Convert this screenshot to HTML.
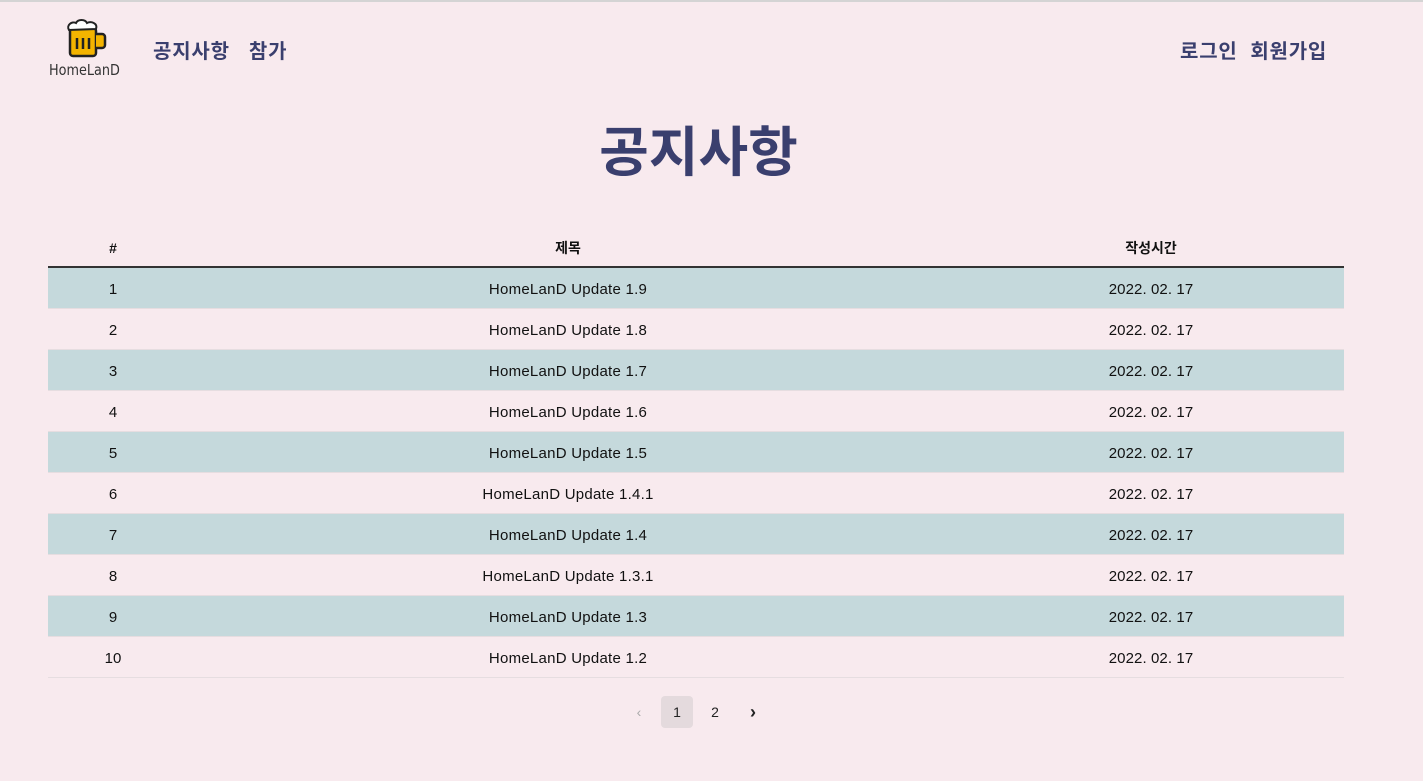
<!DOCTYPE html>
<html><head><meta charset="utf-8"><style>
body{margin:0;width:1423px;height:781px;background:#f8eaee;font-family:"Liberation Sans","Noto Sans CJK KR",sans-serif;border-top:2px solid #d4d4d4;box-sizing:border-box;position:relative;overflow:hidden}
.nav{position:absolute;top:33px;font-size:20px;font-weight:bold;color:#3a3f6e;letter-spacing:0.8px}
h1{position:absolute;top:106px;left:-13px;width:1423px;text-align:center;margin:0;font-size:54px;color:#3a3f6e;font-weight:bold}
table{position:absolute;left:48px;top:228px;width:1296px;border-collapse:collapse;font-size:15px;color:#111}
th{height:36px;padding:0;font-weight:bold;font-size:14px;border-bottom:2px solid #333}
td{height:37px;padding:3px 0 0 0;line-height:16px;text-align:center;border-bottom:1px solid #e6dde0}
td:nth-child(2){letter-spacing:0.25px}
td:nth-child(3){letter-spacing:0.1px}
tr.o td{background:#c5d9dc}
.pg{position:absolute;top:694px;font-size:14px;color:#222;text-align:center;width:32px;height:32px;line-height:32px;border-radius:4px}
</style></head><body>
<svg style="position:absolute;left:64px;top:16px" width="44" height="40" viewBox="0 0 44 40">
<rect x="6" y="10" width="26" height="28" rx="3" fill="#f4b400" stroke="#222" stroke-width="2.5"/>
<path d="M32 16h6a3 3 0 0 1 3 3v8a3 3 0 0 1-3 3h-6" fill="#f4b400" stroke="#222" stroke-width="2.5"/>
<path d="M5 12c-3-5 3-9 7-7 2-4 9-4 11 0 4-2 11 0 9 6z" fill="#fff" stroke="#222" stroke-width="2"/>
<path d="M13 20v11M19 20v11M25 20v11" stroke="#222" stroke-width="2.5"/>
</svg>
<div style="position:absolute;left:49px;top:59px;font-size:15px;color:#333;font-family:'DejaVu Sans Condensed','DejaVu Sans',sans-serif;transform:scaleX(0.95);transform-origin:left">HomeLanD</div>
<div class="nav" style="left:153px">공지사항 &nbsp;&nbsp;참가</div>
<div class="nav" style="left:1180px">로그인 &nbsp;회원가입</div>
<h1>공지사항</h1>
<table>
<tr><th style="width:130px">#</th><th style="width:780px">제목</th><th>작성시간</th></tr>
<tr class="o"><td>1</td><td>HomeLanD Update 1.9</td><td>2022. 02. 17</td></tr>
<tr><td>2</td><td>HomeLanD Update 1.8</td><td>2022. 02. 17</td></tr>
<tr class="o"><td>3</td><td>HomeLanD Update 1.7</td><td>2022. 02. 17</td></tr>
<tr><td>4</td><td>HomeLanD Update 1.6</td><td>2022. 02. 17</td></tr>
<tr class="o"><td>5</td><td>HomeLanD Update 1.5</td><td>2022. 02. 17</td></tr>
<tr><td>6</td><td>HomeLanD Update 1.4.1</td><td>2022. 02. 17</td></tr>
<tr class="o"><td>7</td><td>HomeLanD Update 1.4</td><td>2022. 02. 17</td></tr>
<tr><td>8</td><td>HomeLanD Update 1.3.1</td><td>2022. 02. 17</td></tr>
<tr class="o"><td>9</td><td>HomeLanD Update 1.3</td><td>2022. 02. 17</td></tr>
<tr><td>10</td><td>HomeLanD Update 1.2</td><td>2022. 02. 17</td></tr>
</table>
<div class="pg" style="left:623px;color:#aaa">‹</div>
<div class="pg" style="left:661px;background:#e4dadd">1</div>
<div class="pg" style="left:699px">2</div>
<div class="pg" style="left:737px;font-weight:bold;font-size:18px">›</div>
</body></html>
